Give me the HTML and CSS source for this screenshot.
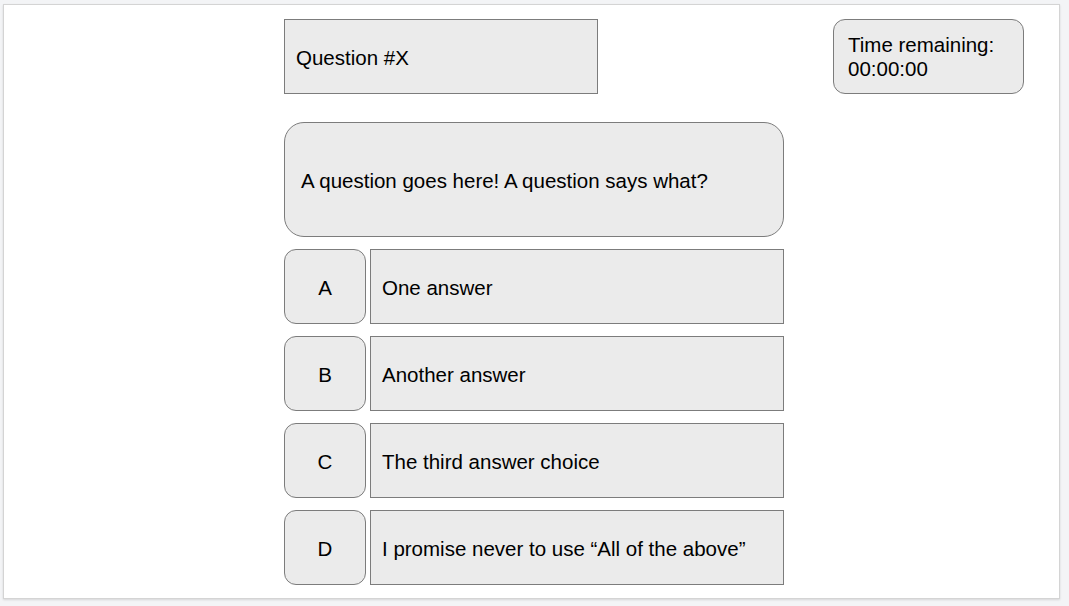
FILE: index.html
```html
<!DOCTYPE html>
<html lang="en">
<head>
<meta charset="utf-8">
<title>Quiz wireframe</title>
<link rel="stylesheet" href="styles.css">
</head>
<body>
<div class="slide">
  <div class="main">
    <div class="box qnum">Question #X</div>
    <div class="box question">A question goes here! A question says what?</div>
    <div class="row">
      <div class="box letter">A</div>
      <div class="box answer">One answer</div>
    </div>
    <div class="row">
      <div class="box letter">B</div>
      <div class="box answer">Another answer</div>
    </div>
    <div class="row">
      <div class="box letter">C</div>
      <div class="box answer">The third answer choice</div>
    </div>
    <div class="row">
      <div class="box letter">D</div>
      <div class="box answer">I promise never to use “All of the above”</div>
    </div>
  </div>
  <div class="box timer">Time remaining:<br>00:00:00</div>
</div>
</body>
</html>
```
FILE: styles.css
```css
html, body {
  margin: 0;
  padding: 0;
}
body {
  background: #f3f4f6;
  width: 1069px;
  height: 606px;
  padding: 4px 0 0 3px;
  box-sizing: border-box;
  font-family: "Liberation Sans", Arial, sans-serif;
  font-size: 20.5px;
  color: #000;
}
.slide {
  box-sizing: border-box;
  width: 1057px;
  height: 595px;
  background: #fff;
  border: 1px solid #d4d4d4;
  box-shadow: 0 1px 2px rgba(0,0,0,0.12);
  display: flex;
  align-items: flex-start;
  padding: 14px 0 0 280px;
  gap: 49px;
}
.main {
  width: 500px;
  display: flex;
  flex-direction: column;
}
.box {
  box-sizing: border-box;
  background: #ebebeb;
  border: 1px solid #7c7c7c;
  display: flex;
  align-items: center;
  line-height: 24px;
  padding-top: 2px;
}
.qnum {
  width: 314px;
  height: 75px;
  padding-left: 11px;
}
.question {
  margin-top: 28px;
  height: 115px;
  border-radius: 20px;
  padding-left: 16px;
  padding-top: 3px;
}
.row {
  display: flex;
  gap: 4px;
  height: 75px;
  margin-top: 12px;
}
.letter {
  width: 82px;
  border-radius: 12px;
  justify-content: center;
}
.answer {
  flex: 1;
  padding-left: 11px;
}
.timer {
  width: 191px;
  height: 75px;
  border-radius: 12px;
  padding-left: 14px;
  padding-top: 1px;
}
```
